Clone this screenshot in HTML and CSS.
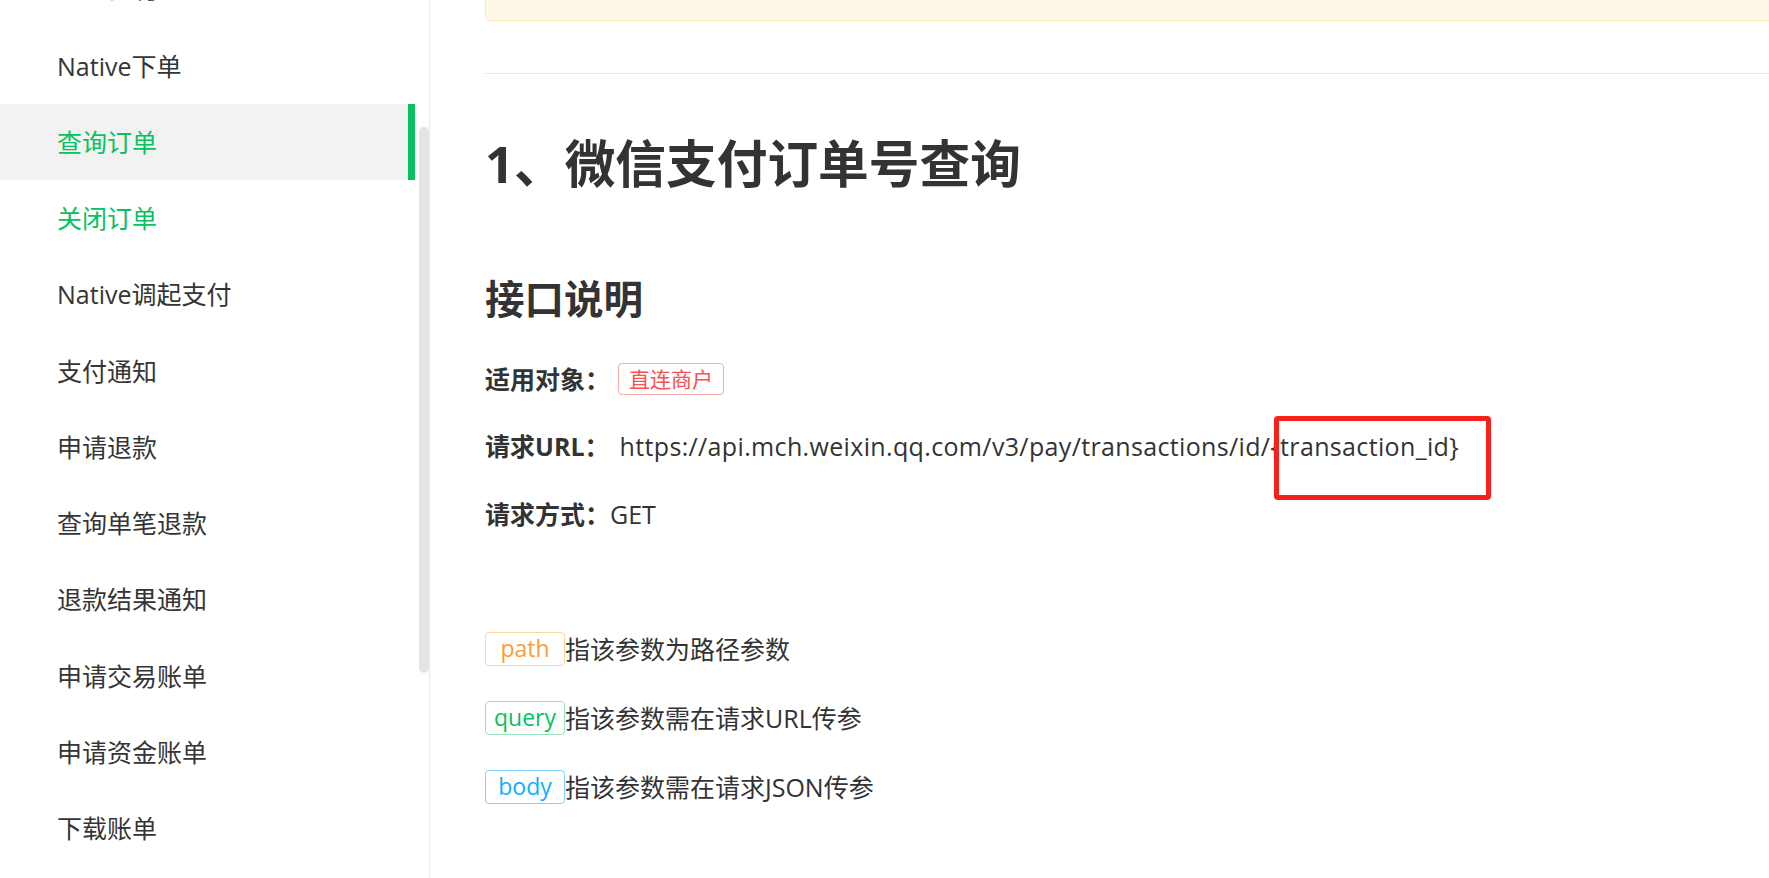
FILE: index.html
```html
<!DOCTYPE html>
<html lang="zh-CN">
<head>
<meta charset="utf-8">
<title>查询订单</title>
<link rel="stylesheet" href="styles.css">
</head>
<body>
<aside class="sidebar">
  <ul class="menu">
    <li class="menu-item menu-group">Native支付</li>
    <li class="menu-item">Native下单</li>
    <li class="menu-item active">查询订单</li>
    <li class="menu-item hover">关闭订单</li>
    <li class="menu-item">Native调起支付</li>
    <li class="menu-item">支付通知</li>
    <li class="menu-item">申请退款</li>
    <li class="menu-item">查询单笔退款</li>
    <li class="menu-item">退款结果通知</li>
    <li class="menu-item">申请交易账单</li>
    <li class="menu-item">申请资金账单</li>
    <li class="menu-item">下载账单</li>
  </ul>
  <div class="scroll-thumb"></div>
</aside>
<main class="content">
  <div class="notice"></div>
  <div class="divider"></div>
  <h1 class="title">1、微信支付订单号查询</h1>
  <h2 class="subtitle">接口说明</h2>
  <div class="row row-first">
    <span class="label">适用对象：</span>
    <span class="tag tag-red">直连商户</span>
  </div>
  <div class="row row-url">
    <span class="label">请求URL：</span>
    <span class="url">https://api.mch.weixin.qq.com/v3/pay/transactions/id/{transaction_id}</span>
  </div>
  <div class="row row-method">
    <span class="label">请求方式：</span>
    <span class="value">GET</span>
  </div>
  <div class="param-row param-first">
    <span class="ptag ptag-path">path</span>
    <span class="desc">指该参数为路径参数</span>
  </div>
  <div class="param-row">
    <span class="ptag ptag-query">query</span>
    <span class="desc">指该参数需在请求URL传参</span>
  </div>
  <div class="param-row">
    <span class="ptag ptag-body">body</span>
    <span class="desc">指该参数需在请求JSON传参</span>
  </div>
</main>
<div class="highlight-box"></div>
</body>
</html>
```
FILE: styles.css
```css
html, body {
  margin: 0;
  padding: 0;
  height: 100%;
  overflow: hidden;
  background: #ffffff;
}
body {
  display: flex;
  font-family: "Open Sans", "Noto Sans CJK SC", sans-serif;
  color: #333333;
  position: relative;
}
.sidebar {
  position: relative;
  width: 430px;
  flex: 0 0 430px;
  box-sizing: border-box;
  border-right: 1px solid #ececec;
  height: 878px;
  overflow: hidden;
}
.menu {
  list-style: none;
  margin: -48.75px 0 0 0;
  padding: 0;
  width: 415px;
}
.menu-item {
  box-sizing: border-box;
  height: 76.25px;
  display: flex;
  align-items: center;
  padding-left: 57px;
  padding-bottom: 2px;
  font-size: 25px;
  color: #353535;
}
.menu-group {
  padding-left: 35px;
  padding-bottom: 5px;
}
.menu-item.active {
  background: #f2f2f2;
  color: #07c160;
  border-right: 7px solid #07c160;
}
.menu-item.hover {
  color: #07c160;
}
.scroll-thumb {
  position: absolute;
  left: 419px;
  top: 127px;
  width: 10px;
  height: 546px;
  border-radius: 5px;
  background: #e4e4e4;
}
.content {
  flex: 1;
  min-width: 0;
  padding-left: 55px;
  overflow: hidden;
}
.notice {
  margin-top: -40px;
  height: 59px;
  margin-right: -20px;
  border: 1px solid #fbe7b8;
  border-radius: 4px;
  background: #fff8e7;
}
.divider {
  margin-top: 52px;
  height: 1px;
  background: #e6e6e6;
}
.title {
  margin: 60px 0 0 0;
  font-size: 50.7px;
  line-height: 60px;
  font-weight: 700;
  color: #333333;
}
.subtitle {
  margin: 80px 0 0 0;
  font-size: 39.5px;
  line-height: 50px;
  font-weight: 700;
  color: #333333;
}
.row {
  display: flex;
  align-items: center;
  height: 40px;
  font-size: 25px;
  line-height: 40px;
}
.row-first { margin-top: 35px; }
.row-url { margin-top: 27px; }
.row-method { margin-top: 28px; }
.label {
  font-weight: 700;
  color: #333333;
}
.tag {
  box-sizing: border-box;
  height: 32px;
  display: inline-flex;
  align-items: center;
  padding: 0 10px;
  margin-left: 8px;
  border-radius: 4px;
  font-size: 21px;
  line-height: 30px;
}
.tag-red {
  color: #fa5151;
  border: 1px solid #f9a9a9;
}
.url {
  margin-left: 10px;
  letter-spacing: 0.35px;
  color: #333333;
}
.value {
  color: #333333;
}
.param-row {
  display: flex;
  align-items: center;
  height: 40px;
  margin-top: 29px;
  font-size: 25px;
  line-height: 40px;
}
.param-first { margin-top: 95px; }
.ptag {
  box-sizing: border-box;
  width: 80px;
  height: 34px;
  display: inline-flex;
  align-items: center;
  justify-content: center;
  border-radius: 4px;
  font-size: 23px;
  line-height: 31px;
  padding-bottom: 1px;
}
.ptag-path { color: #fa9d3b; border: 1px solid #fdd49f; }
.ptag-query { color: #07c160; border: 1px solid #95e4b9; }
.ptag-body { color: #10aeff; border: 1px solid #7fd3ff; }
.desc { color: #333333; }
.highlight-box {
  position: absolute;
  left: 1274px;
  top: 416px;
  width: 217px;
  height: 84px;
  box-sizing: border-box;
  border: 5px solid #f5211a;
  border-radius: 4px;
}
```
